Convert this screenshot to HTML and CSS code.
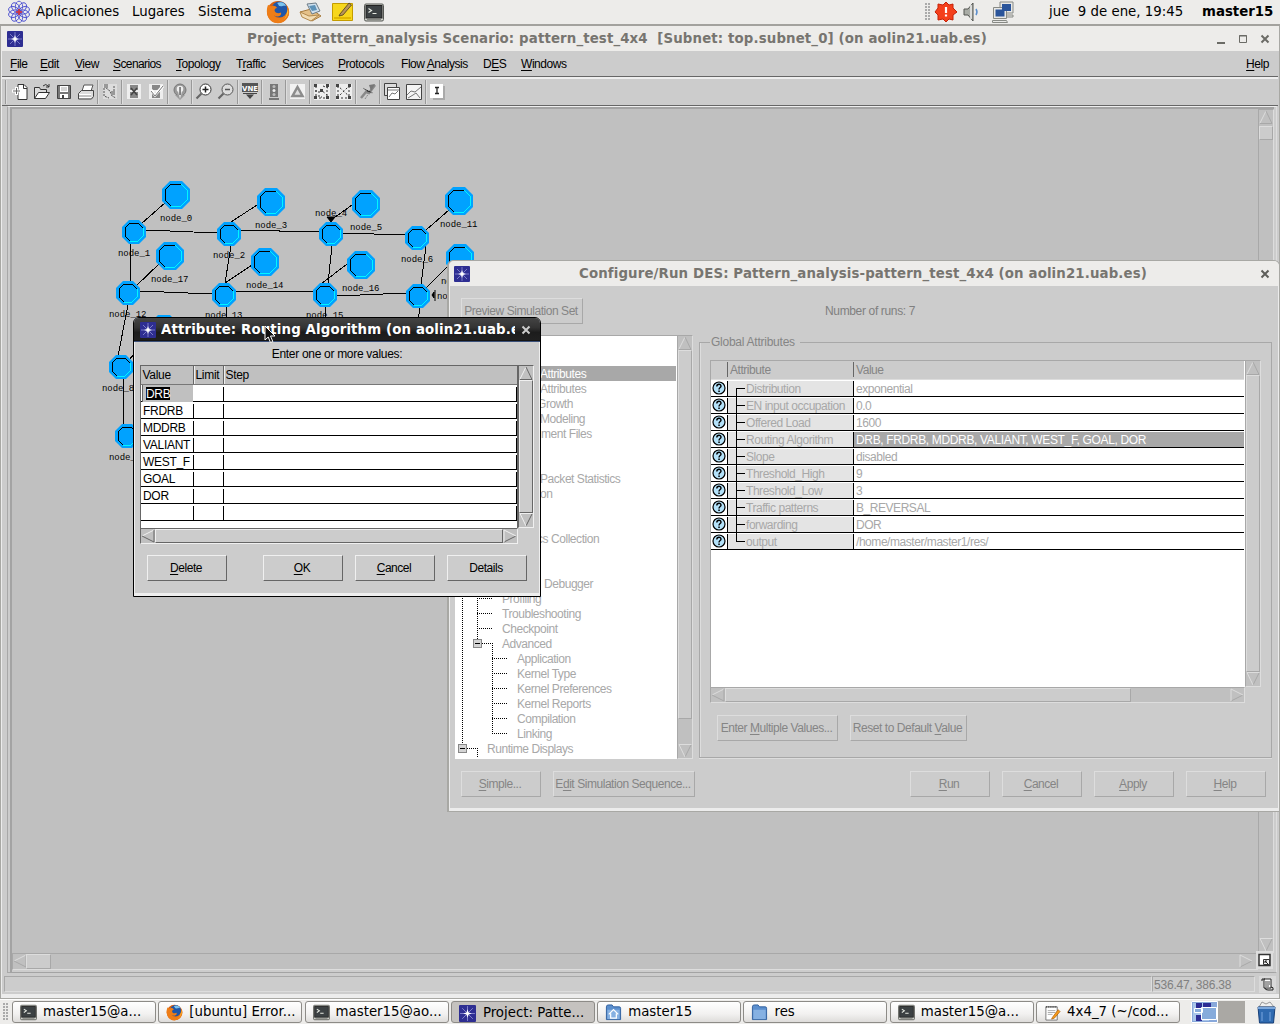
FILE: index.html
```html
<!DOCTYPE html>
<html lang="es">
<head>
<meta charset="utf-8">
<title>Pattern_analysis</title>
<link rel="stylesheet" href="styles.css">
</head>
<body>
<svg class="defs" width="0" height="0">
  <symbol id="up" viewBox="0 0 14 14"><path d="M7 1L1 13" stroke="var(--hi)"/><path d="M7 1l6 12.5H1" fill="none" stroke="var(--lo)"/></symbol>
  <symbol id="down" viewBox="0 0 14 14"><path d="M13 1L7 13" stroke="var(--lo)"/><path d="M13.500 .5H1l6 12.500" fill="none" stroke="var(--hi)"/></symbol>
  <symbol id="left" viewBox="0 0 14 14"><path d="M1 7l12-6" stroke="var(--hi)"/><path d="M1 7l12 6V1" fill="none" stroke="var(--lo)"/></symbol>
  <symbol id="right" viewBox="0 0 14 14"><path d="M1 13l12-6" stroke="var(--lo)"/><path d="M1 13V1l12 6" fill="none" stroke="var(--hi)"/></symbol>
  <symbol id="star" viewBox="0 0 16 16"><rect width="16" height="16" rx="1" fill="#2e2e92"/><path d="M8 1v14M1 8h14M3 3l10 10M13 3L3 13" stroke="#8f8fd4" stroke-width=".8"/><path d="M8 4l1 3 3 1-3 1-1 3-1-3-3-1 3-1z" fill="#fff"/></symbol>
  <symbol id="term" viewBox="0 0 20 18"><rect x=".5" y=".5" width="19" height="17" rx="1.500" fill="#d0d2cc" stroke="#555753"/><rect x="2" y="2" width="16" height="12.500" fill="#3c4143" stroke="#222"/><path d="M4.500 5l3 2-3 2M8.500 10h4" fill="none" stroke="#e8ece4" stroke-width="1.200"/><path d="M3 16h14" stroke="#888a85"/></symbol>
  <symbol id="fox" viewBox="0 0 24 24"><circle cx="12" cy="12" r="11" fill="#d9600f"/><circle cx="13.500" cy="9.500" r="8" fill="#1f56a8"/><path d="M11 3c4-2 8 0 9 3-3-1-4 1-6 0-2 0-1-2-3-3z" fill="#7cc4ee"/><path d="M2 5c2 0 2 2 4 1 2-.500 4 0 5 2-2 0-3 2-2 3.500 1 2 4 2 6 1 1 4-4 5-7 3 3 4 11 3 13-4 1-3 0-5-1-7 4 4 4 10 1 14-5 7-16 6-19-2C0 12 1 8 2 5z" fill="#ee7d17"/><path d="M22 9c1 7-4 12-10 12 4 0 8-2 9-8z" fill="#ffd23c"/></symbol>
  <symbol id="folder" viewBox="0 0 18 18"><path d="M1.500 3q0-2 2-2h4l1.500 2h6q1.500 0 1.500 1.500v12H1.500z" fill="#5b8fce" stroke="#2f5f9e"/><path d="M2.500 6h13v10h-13z" fill="#86b1e2"/></symbol>
  <symbol id="help" viewBox="0 0 14 14"><circle cx="7" cy="7" r="6" fill="#b4e2fa" stroke="#000" stroke-width="1.200"/><path d="M4.800 5.500C4.800 2.500 9.200 2.500 9 5.300 8.900 6.600 7 6.600 7 8.500" fill="none" stroke="#000" stroke-width="1.400"/><path d="M6.300 9.600h1.500v1.500H6.300z"/></symbol>
  <symbol id="big" viewBox="-14 -14 28 28" overflow="visible"><path d="M-6-14H6L14-6V6L6 14H-6L-14 6V-6z" fill="#00a2ff"/><path d="M-5 11L-11 5V-5L-5-11H5" fill="none" stroke="#000" shape-rendering="crispEdges"/><path d="M5-11L11-5V5L5 11H-5" fill="none" stroke="#00f6ff" shape-rendering="crispEdges"/></symbol>
  <symbol id="small" viewBox="-12 -12 24 24" overflow="visible"><path d="M-5-12H5L12-5V5L5 12H-5L-12 5V-5z" fill="#00a2ff"/><path d="M-4 9L-9 4V-4L-4-9H4L9-4" fill="none" stroke="#000" shape-rendering="crispEdges"/><path d="M9-4V4L4 9H-4" fill="none" stroke="#00f6ff" shape-rendering="crispEdges"/></symbol>
</svg>

<div class="panel top-panel">
  <svg width="24" height="24" viewBox="0 0 24 24" fill="none" stroke="#4a4ed0" stroke-width=".9"><g id="pet"><ellipse cx="12" cy="6.500" rx="3.600" ry="5.300"/><ellipse cx="12" cy="17.500" rx="3.600" ry="5.300"/></g><use href="#pet" transform="rotate(36 12 12)"/><use href="#pet" transform="rotate(72 12 12)"/><use href="#pet" transform="rotate(108 12 12)"/><use href="#pet" transform="rotate(144 12 12)"/><path d="M12 9v6M9 12h6" stroke="#d33" stroke-width="1.500"/></svg>
  <span>Aplicaciones</span><span>Lugares</span><span>Sistema</span>
  <svg width="24" height="24"><use href="#fox"/></svg>
  <svg width="24" height="22" viewBox="0 0 24 22"><path d="M1 11l11-3 10 7-9 5z" fill="#e5c188" stroke="#a77b3e"/><path d="M8 3l9-1 4 8-8 3z" fill="#cfe0ee" stroke="#6e7c86"/><path d="M10 5l6-1 2 5-5 1z" fill="#5d92b8"/><path d="M1 11l9 4 10-1-8 6-9-4z" fill="#f2dcb2" stroke="#b48a4e"/></svg>
  <svg width="22" height="20" viewBox="0 0 22 20"><path d="M.5 1.500h20v17H.5z" fill="#f7d71c" stroke="#c49c00"/><path d="M2 16h17" stroke="#e2b900" stroke-width="2"/><path d="M8 12L17 1l2.500 2L11 13l-4 1z" fill="#b8945a" stroke="#4e3d18" stroke-width=".8"/></svg>
  <svg width="20" height="19"><use href="#term"/></svg>
  <i></i>
  <b class="grip"></b>
  <svg width="24" height="24" viewBox="0 0 24 24"><path d="M12 2l3 3 4-1v4l4 4-4 3v5l-4-1-3 3-3-3-5 1v-5l-3-3 3-4V4l5 1z" fill="#f4401c" stroke="#c62208"/><path d="M12 7v6M12 14.500v2" stroke="#fff" stroke-width="2.200"/></svg>
  <svg width="18" height="20" viewBox="0 0 18 20"><path d="M1 7h4l5-6v18l-5-6H1z" fill="#a9aca6" stroke="#555753"/><path d="M8 3v14" stroke="#eee" stroke-width="1.500"/><path d="M13 7q2 3 0 6" fill="none" stroke="#5b8fce" stroke-width="1.500"/></svg>
  <svg width="22" height="22" viewBox="0 0 22 22"><g stroke="#888a85" fill="#e8e8e6"><path d="M8 1h13v11H8zM12 14h9v2h-9z"/><path d="M1.500 6.500h13v11h-13zM0.500 19.500h14l1 2h-15z"/></g><path d="M10 3h9v7h-9zM3.500 8.500h9v7h-9z" fill="#2a549a"/></svg>
  <span>jue&nbsp; 9 de ene, 19:45</span><strong>master15</strong>
</div>

<main class="window project">
  <div class="titlebar"><svg width="16" height="16"><use href="#star"/></svg><span>Project: Pattern_analysis Scenario: pattern_test_4x4&nbsp; [Subnet: top.subnet_0] (on aolin21.uab.es)</span>
    <svg width="58" height="14" viewBox="0 0 58 14" fill="none" stroke="#6b6b66"><path d="M4 11h8" stroke-width="2"/><path d="M26.500 3.500h7v7h-7z"/><path d="M26 4h8"/><path d="M48.500 3.500l7 7M55.500 3.500l-7 7" stroke-width="2"/></svg></div>
  <nav class="menu"><span><u>F</u>ile</span><span><u>E</u>dit</span><span><u>V</u>iew</span><span><u>S</u>cenarios</span><span><u>T</u>opology</span><span>T<u>r</u>affic</span><span>Serv<u>i</u>ces</span><span><u>P</u>rotocols</span><span>Flow <u>A</u>nalysis</span><span>D<u>E</u>S</span><span><u>W</u>indows</span><span><u>H</u>elp</span></nav>
  <div class="toolbar">
    <b></b>
    <svg viewBox="0 0 22 22"><path d="M9 3.500h6l3 3v12H9z" fill="#fff" stroke="#333"/><path d="M14.500 4v3.500H18" fill="none" stroke="#333"/><path d="M3 10h9M7.500 6v8" stroke="#fff" stroke-width="3"/><path d="M4 10h7M7.500 7v6" stroke="#666"/></svg>
    <svg viewBox="0 0 22 22"><path d="M3.500 17.500v-11h5l1 2h6v3" fill="#ddd" stroke="#333"/><path d="M3.500 17.500l4-6h11l-4 6z" fill="#fff" stroke="#333"/><path d="M12 5q3-3 5 0l1 1m0-3v3h-3" fill="none" stroke="#333"/></svg>
    <svg viewBox="0 0 22 22"><path d="M4.500 4.500h13v13h-13z" fill="#777" stroke="#444"/><path d="M7 5h8v6H7zM7 13h8v4H7z" fill="#fff"/><path d="M8 7h6M8 9h6" stroke="#aaa"/><path d="M9 14h2v3H9z" fill="#444"/></svg>
    <svg viewBox="0 0 22 22"><path d="M7 10l2-6h9l-2 6z" fill="#fff" stroke="#555"/><path d="M3.500 12.500l3-3h12v6l-2 2.500h-13z" fill="#ddd" stroke="#444"/><path d="M4 13h12v4H4z" fill="#fff"/><path d="M4 15h12" stroke="#888"/></svg>
    <b></b>
    <svg viewBox="0 0 22 22"><path d="M4 3h14v15H4z" fill="#ddd"/><path d="M6 4l2 4 3 2 2 5 4 2M15 5v9M5 7v8l5 2" stroke="#555" fill="none" stroke-dasharray="2 1"/><path d="M5 3h4v4H5zM12 10h4v4h-4z" fill="#999"/></svg>
    <b></b>
    <svg viewBox="0 0 22 22"><path d="M4 3h14v15H4z" fill="#eee"/><path d="M7 4h8v5H7zM7 11h8v6H7z" fill="#888"/><path d="M8 7l6 7M14 7l-6 7" stroke="#444" stroke-width="1.600"/></svg>
    <svg viewBox="0 0 22 22"><path d="M4 3h14v15H4z" fill="#eee"/><path d="M7 4h8v5H7zM7 11h8v6H7z" fill="#888"/><path d="M6 9l4 5 8-9" stroke="#fff" stroke-width="3" fill="none"/><path d="M6 10l4 5 8-10" stroke="#777" fill="none"/></svg>
    <b></b>
    <svg viewBox="0 0 22 22"><circle cx="11" cy="9" r="6" fill="#999" stroke="#777"/><path d="M6 14h10l-5 5z" fill="#999"/><circle cx="11" cy="8" r="3.300" fill="#eee"/><path d="M9 11h4l-2 7z" fill="#ddd"/><path d="M10.300 6h1.500v8h-1.500z" fill="#666"/></svg>
    <b></b>
    <svg viewBox="0 0 22 22"><circle cx="12.500" cy="8.500" r="5.500" fill="#fff" stroke="#333"/><path d="M8.500 12.500l-5 5" stroke="#666" stroke-width="2.200"/><path d="M9.500 8.500h6M12.500 5.500v6" stroke="#222" stroke-width="1.500"/></svg>
    <svg viewBox="0 0 22 22"><circle cx="12.500" cy="8.500" r="5.500" fill="#ddd" stroke="#555"/><path d="M8.500 12.500l-5 5" stroke="#666" stroke-width="2.200"/><path d="M10 8.500h5" stroke="#555" stroke-width="1.500"/></svg>
    <b></b>
    <svg viewBox="0 0 22 22"><path d="M3 2h16v9H3z" fill="#555"/><text x="11" y="9.500" text-anchor="middle" class="vne">VNE</text><path d="M4 12.500h14" stroke="#444"/><path d="M7 13.500h8l-4 4.500z" fill="#444"/></svg>
    <b></b>
    <svg viewBox="0 0 22 22"><path d="M7 3h8v13H7zM6 17h10v2H6z" fill="#777"/><circle cx="11" cy="5.500" r="1.500" fill="#bbb"/><circle cx="11" cy="9.500" r="1.500" fill="#eee"/><circle cx="11" cy="13.500" r="1.500" fill="#bbb"/></svg>
    <b></b>
    <svg viewBox="0 0 22 22"><path d="M3 3h15v15H3z" fill="#f2f2f2"/><path d="M10.500 6l5 9h-10z" fill="#ddd" stroke="#8c8c8c" stroke-width="2.500"/></svg>
    <b></b>
    <svg viewBox="0 0 22 22"><path d="M3 3h16v16H3z" fill="#eee"/><path d="M4 4h4M4 10h4v6h3M9 8l7 6M12 5l5 2M5 5v11M16 5v12M4 17h14" stroke="#333" stroke-dasharray="2 2" fill="none"/><path d="M3 3h3v3H3zM15 3h3v3h-3zM3 15h3v3H3zM15 15h3v3h-3zM9 8h3v3H9z" fill="#444"/></svg>
    <svg viewBox="0 0 22 22"><path d="M3 3h16v16H3z" fill="#eee"/><path d="M4 4l14 13M17 4L4 17M5 5v11M16 5v12M4 17h14" stroke="#333" stroke-dasharray="2 2" fill="none"/><path d="M3 3h3v3H3zM15 3h3v3h-3zM3 15h3v3H3zM15 15h3v3h-3z" fill="#444"/></svg>
    <b></b>
    <svg viewBox="0 0 22 22"><path d="M4 17l5-6 3 1 6-8" stroke="#888" stroke-width="2.500" fill="none"/><path d="M6 7l5 4 5 1M8 18l4-6" stroke="#888" stroke-dasharray="2 1"/><path d="M12 4l6-1-4 7z" fill="#777"/></svg>
    <b></b>
    <svg viewBox="0 0 22 22"><path d="M3.500 2.500h12v12h-12z" fill="#ddd" stroke="#444"/><path d="M6.500 6.500h12v12h-12z" fill="#fff" stroke="#444"/><path d="M7 9h11M8 16l3-4 3 1 3-3" fill="none" stroke="#777"/></svg>
    <svg viewBox="0 0 22 22"><path d="M3.500 3.500h15v15h-15z" fill="#f4f4f4" stroke="#444"/><path d="M4 14l4-4 4 1 6-5M5 17l5-3 3-2 4 5" fill="none" stroke="#777"/></svg>
    <b></b>
    <svg viewBox="0 0 22 22"><path d="M6 5h12v14H6z" fill="#aaa"/><path d="M3 3h13v14H3z" fill="#fff"/><path d="M8 6.500h4M8 12.500h4M10 6v7" stroke="#222" stroke-width="1.300"/></svg>
  </div>
  <div class="workspace">
    <div class="canvas">
      <svg class="net" width="1246" height="844" viewBox="12 109 1246 844">
        <g stroke="#000" fill="none" shape-rendering="crispEdges">
          <path d="M166 202L141 224M146 230L217 233M241 230h38v1h42M343 233L405 235M257 205L231 222M352 205L331 220M449 210L426 230"/>
          <path d="M130 243L131 282M231 246L225 283M332 246L328 283M426 246L421 285M159 264L136 286M252 265L225 283M347 264L321 284M447 267L426 288"/>
          <path d="M140 291L212 294M236 291H313M337 296L406 293M128 305L118 356M227 306L226 320M325 306V320M420 308L418 320M123 378V425M129 360L134 354"/>
        </g>
        <path d="M327 217h8l-4 5zM435 290v11M434 292l-2 3 2 3z" stroke="#000"/>
        <use href="#big" x="162" y="181" width="28" height="28"/><use href="#big" x="257" y="188" width="28" height="28"/><use href="#big" x="156" y="242" width="28" height="28"/><use href="#big" x="251" y="248" width="28" height="28"/><use href="#big" x="352" y="190" width="28" height="28"/><use href="#big" x="445" y="187" width="28" height="28"/><use href="#big" x="347" y="251" width="28" height="28"/><use href="#big" x="446" y="244" width="28" height="28"/><use href="#big" x="150" y="315" width="28" height="28"/>
        <use href="#small" x="122" y="220" width="24" height="24"/><use href="#small" x="217" y="222" width="24" height="24"/><use href="#small" x="319" y="222" width="24" height="24"/><use href="#small" x="405" y="226" width="24" height="24"/><use href="#small" x="116" y="281" width="24" height="24"/><use href="#small" x="212" y="283" width="24" height="24"/><use href="#small" x="313" y="283" width="24" height="24"/><use href="#small" x="406" y="284" width="24" height="24"/><use href="#small" x="109" y="355" width="24" height="24"/><use href="#small" x="115" y="424" width="24" height="24"/>
        <g class="node"><text x="160" y="221">node_0</text><text x="118" y="256">node_1</text><text x="255" y="228">node_3</text><text x="213" y="258">node_2</text><text x="151" y="282">node_17</text><text x="246" y="288">node_14</text><text x="109" y="317">node_12</text><text x="205" y="318">node_13</text><text x="315" y="216">node_4</text><text x="350" y="230">node_5</text><text x="440" y="227">node_11</text><text x="401" y="262">node_6</text><text x="342" y="291">node_16</text><text x="306" y="318">node_15</text><text x="441" y="284">no</text><text x="437" y="299">no</text><text x="102" y="391">node_8</text><text x="109" y="460">node_</text></g>
      </svg>
      <div class="vbar"><svg><use href="#up"/></svg><b></b><svg><use href="#down"/></svg></div>
      <div class="hbar"><svg><use href="#left"/></svg><b></b><svg><use href="#right"/></svg></div>
      <svg class="corner" viewBox="0 0 17 18"><path d="M0 0h17v18H0z" fill="#ddd"/><path d="M3 3.500h11v11H3z" fill="#fff" stroke="#333" stroke-width="1.500"/><path d="M7.500 8.500h6v5h-6z" fill="#eee" stroke="#333"/><path d="M9 10l3 3M9 12v-2h2" stroke="#222" fill="none"/></svg>
    </div>
  </div>
  <div class="status"><span></span><span>536.47, 386.38</span><svg width="17" height="17" viewBox="0 0 17 17"><path d="M0 0h17v17H0z" fill="#d9d9d9"/><path d="M5 3h7v9H5z" fill="#fff" stroke="#222"/><path d="M3 5V3h3M6 12q0 2 3 2h5q1-3-2-3" fill="none" stroke="#222"/><path d="M6 6h5M6 8h5M6 10h4" stroke="#444"/></svg></div>
</main>

<section class="window config">
  <div class="titlebar"><svg width="16" height="16"><use href="#star"/></svg><span>Configure/Run DES: Pattern_analysis-pattern_test_4x4 (on aolin21.uab.es)</span><svg width="14" height="14" viewBox="0 0 14 14"><path d="M3.500 3.500l7 7M10.500 3.500l-7 7" stroke="#5e5e5a" stroke-width="2"/></svg></div>
  <div class="cfg-top"><button>Preview Simulation Set</button><span>Number of runs: 7</span></div>
  <div class="cfg-mid">
    <div class="tree">
      <ul>
        <li class="sel c1">Attributes</li><li class="c1">Attributes</li><li class="c0">Growth</li><li class="c1">Modeling</li><li class="c2">ment Files</li><li></li><li></li><li class="c1">Packet Statistics</li><li class="c1">on</li><li></li><li></li><li class="c0">cs Collection</li><li class="c0">l</li><li></li><li class="c3">Debugger</li>
        <li class="l2">Profiling</li><li class="l2">Troubleshooting</li><li class="l2">Checkpoint</li><li class="l2">Advanced</li><li class="l3">Application</li><li class="l3">Kernel Type</li><li class="l3">Kernel Preferences</li><li class="l3">Kernel Reports</li><li class="l3">Compilation</li><li class="l3">Linking</li><li class="l1">Runtime Displays</li>
      </ul>
      <svg class="branches" width="60" height="170" viewBox="455 590 60 170" shape-rendering="crispEdges"><path d="M462.500 590V744M477.500 590V639M477 598.500h15M477 613.500h15M477 628.500h15M482 643.500h10M492.500 643V734M492 658.500h15M492 673.500h15M492 688.500h15M492 703.500h15M492 718.500h15M492 733.500h15M467 748.500h10M477.500 748v10" stroke="#000" stroke-dasharray="1 1" fill="none"/><path d="M473.500 639.500h8v8h-8zM458.500 744.500h8v8h-8z" fill="#d4d4d4" stroke="#888"/><path d="M475 643.500h5M460 748.500h5" stroke="#000"/></svg>
    </div>
    <div class="vbar"><svg><use href="#up"/></svg><b></b><svg><use href="#down"/></svg></div>
    <fieldset>
      <legend>Global Attributes</legend>
      <div class="grid-wrap">
        <div class="attrs">
          <div class="r head"><span></span><span>Attribute</span><span>Value</span></div>
          <div class="r"><svg><use href="#help"/></svg><span>Distribution</span><span>exponential</span></div>
          <div class="r"><svg><use href="#help"/></svg><span>EN input occupation</span><span>0.0</span></div>
          <div class="r"><svg><use href="#help"/></svg><span>Offered Load</span><span>1600</span></div>
          <div class="r on"><svg><use href="#help"/></svg><span>Routing Algorithm</span><span>DRB, FRDRB, MDDRB, VALIANT, WEST_F, GOAL, DOR</span></div>
          <div class="r"><svg><use href="#help"/></svg><span>Slope</span><span>disabled</span></div>
          <div class="r"><svg><use href="#help"/></svg><span>Threshold_High</span><span>9</span></div>
          <div class="r"><svg><use href="#help"/></svg><span>Threshold_Low</span><span>3</span></div>
          <div class="r"><svg><use href="#help"/></svg><span>Traffic patterns</span><span>B_REVERSAL</span></div>
          <div class="r"><svg><use href="#help"/></svg><span>forwarding</span><span>DOR</span></div>
          <div class="r"><svg><use href="#help"/></svg><span>output</span><span>/home/master/master1/res/</span></div>
        </div>
        <div class="vbar"><svg><use href="#up"/></svg><b></b><svg><use href="#down"/></svg></div>
        <div class="hbar"><svg><use href="#left"/></svg><b></b><svg><use href="#right"/></svg></div>
      </div>
      <div class="fs-buttons"><button>Enter <u>M</u>ultiple Values...</button><button>Reset to Default <u>V</u>alue</button></div>
    </fieldset>
  </div>
  <div class="cfg-bottom"><button><u>S</u>imple...</button><button class="wide">E<u>di</u>t Simulation Sequence...</button><i></i><button><u>R</u>un</button><button><u>C</u>ancel</button><button><u>A</u>pply</button><button><u>H</u>elp</button></div>
</section>

<section class="window dialog">
  <div class="titlebar"><svg width="16" height="16"><use href="#star"/></svg><span>Attribute: Routing Algorithm (on aolin21.uab.es)</span><svg width="14" height="14" viewBox="0 0 14 14"><path d="M3.500 3.500l7 7M10.500 3.500l-7 7" stroke="#ccc" stroke-width="2"/></svg></div>
  <p>Enter one or more values:</p>
  <div class="grid-wrap">
    <div class="vals">
      <div class="r head"><span>Value</span><span>Limit</span><span>Step</span></div>
      <div class="r edit"><span><mark>DRB</mark></span><span></span><span></span></div>
      <div class="r"><span>FRDRB</span><span></span><span></span></div>
      <div class="r"><span>MDDRB</span><span></span><span></span></div>
      <div class="r"><span>VALIANT</span><span></span><span></span></div>
      <div class="r"><span>WEST_F</span><span></span><span></span></div>
      <div class="r"><span>GOAL</span><span></span><span></span></div>
      <div class="r"><span>DOR</span><span></span><span></span></div>
      <div class="r"><span></span><span></span><span></span></div>
    </div>
    <div class="vbar"><svg><use href="#up"/></svg><b></b><svg><use href="#down"/></svg></div>
    <div class="hbar"><svg><use href="#left"/></svg><b></b><svg><use href="#right"/></svg></div>
  </div>
  <div class="dlg-buttons"><button><u>D</u>elete</button><i></i><button><u>O</u>K</button><button><u>C</u>ancel</button><button>Details</button></div>
</section>
<svg class="cursor" width="12" height="19" viewBox="0 0 12 19"><path d="M1 1v14l3.200-3 2.300 5.500 2.300-1L6.500 11H11z" fill="#111" stroke="#fff"/></svg>

<div class="panel taskbar">
  <b class="grip"></b>
  <div class="task"><svg><use href="#term"/></svg>master15@a...</div>
  <div class="task"><svg><use href="#fox"/></svg>[ubuntu] Error...</div>
  <div class="task"><svg><use href="#term"/></svg>master15@ao...</div>
  <div class="task active"><svg><use href="#star"/></svg>Project: Patte...</div>
  <div class="task"><svg viewBox="0 0 18 18"><use href="#folder"/><path d="M4 11l5-5 5 5M6 10v5h6v-5" fill="none" stroke="#fff" stroke-width="1.300"/></svg>master15</div>
  <div class="task"><svg><use href="#folder"/></svg>res</div>
  <div class="task"><svg><use href="#term"/></svg>master15@a...</div>
  <div class="task"><svg viewBox="0 0 18 18"><path d="M2 3h12v14H2z" fill="#fff" stroke="#777"/><path d="M2 3h12" stroke="#444" stroke-width="2" stroke-dasharray="1 1"/><path d="M4 7h8M4 9h8M4 11h5" stroke="#aaa"/><path d="M9 14l6-8 2 2-6 7-3 1z" fill="#f59a1a" stroke="#a85a00" stroke-width=".7"/></svg>4x4_7 (~/cod...</div>
  <svg class="pager" width="54" height="22" viewBox="0 0 54 22"><path d="M0 0h54v22H0z" fill="#aaa8a4"/><path d="M0 0h27v22H0z" fill="#88a8da"/><path d="M2 2h16v18H2z" fill="#a9c6ea"/><path d="M5 2h6v5H5zM12 2h8v5h-8zM5 14h6v6H5z" fill="#2c2c94"/><path d="M3.500 7.500h8v4h-8zM10.500 6.500h15v12h-15z" fill="#86abdb" stroke="#fff"/><path d="M.5.500h26v21H.5z" fill="none" stroke="#fff"/></svg>
  <svg class="trash" width="21" height="23" viewBox="0 0 21 23"><path d="M3 6l3-5 4 2 4-2 4 5z" fill="#eee" stroke="#999"/><path d="M2 6h17l-1.500 16h-14z" fill="#2f6ab0" stroke="#173f78"/><path d="M2 7h17" stroke="#7ba7dc" stroke-width="2"/><path d="M6 11v9M14 11v9" stroke="#5488c8" stroke-width="2"/></svg>
</div>
</body>
</html>
```
FILE: styles.css
```css
* { box-sizing: border-box; }
body { margin: 0; width: 1280px; height: 1024px; overflow: hidden; position: relative; background: #ccc;
  font: 12px/15px "Liberation Sans", Arial, sans-serif; letter-spacing: -.45px; color: #000; --hi: #ddd; --lo: #a8a8a8; }
svg { display: block; flex: none; }
.defs { position: absolute; }
u { text-decoration: underline; text-underline-offset: 2px; text-decoration-thickness: 1px; }
button { font: inherit; letter-spacing: inherit; color: #858585; background: #ccc; border: 1px solid; border-color: var(--hi) var(--lo) var(--lo) var(--hi); width: 80px; height: 26px; padding: 1px 2px 0 0; white-space: nowrap; }

.panel { background: #edecea; display: flex; align-items: center; font: 13.33px/20px "DejaVu Sans", sans-serif; letter-spacing: 0; white-space: nowrap; }
.top-panel { height: 26px; padding: 0 0 2px 7px; border-bottom: 2px solid #a3a29e; display: grid;
  grid-template-columns: 29px 96px 66px 68px 33px 33px 32px 24px 1fr 9px 29px 29px 57px 153px 78px; }
.grip { width: 5px; height: 18px; background: radial-gradient(circle at 1px 1px, #aaa 1px, transparent 1.2px) 0 0 / 3px 3px; }

.window { position: absolute; }
.titlebar { display: flex; align-items: center; height: 25px; background: #edecea; color: #777570; font: bold 13.33px/20px "DejaVu Sans", sans-serif; letter-spacing: .13px; white-space: nowrap; }
.titlebar span { flex: 1; text-align: center; overflow: hidden; }

.project { left: 0; top: 26px; width: 1280px; height: 973px; border: solid #a8a8a4; border-width: 0 1px 1px 1px; background: #ccc; display: flex; flex-direction: column; box-shadow: inset 1px -4px 0 #ececec; }
.project .titlebar { padding: 0 8px 0 6px; }
.project .titlebar span { padding-right: 2px; }
.menu { height: 26px; display: grid; align-items: center; padding: 2px 9px 0 8px; margin: 0 1px; border-bottom: 1px solid #666;
  grid-template-columns: 30px 35px 38px 63px 60px 46px 56px 63px 82px 38px 1fr auto; }
.menu span:nth-child(4), .menu span:nth-child(7) { letter-spacing: -.6px; }
.toolbar { height: 29px; display: flex; align-items: center; padding-left: 3px; margin: 0 1px; border-top: 2px solid #eee; border-bottom: 1px solid #666; }
.toolbar svg { width: 22px; height: 22px; }
.toolbar b { width: 2px; height: 24px; border-left: 1px solid #999; border-right: 1px solid #ddd; }
.toolbar b:first-child { margin-right: 2px; }
.vne { font: bold 7px "DejaVu Sans", sans-serif; fill: #fff; letter-spacing: 0; }
.workspace { flex: none; height: 867px; margin: 0 2px 0 6px; border: 1px solid #a8a8a8; border-right-color: #ddd; border-top-color: #eee; padding: 0 2px 2px 2px; }
.canvas { height: 866px; border: solid #a3a3a3; border-width: 2px 0 1px 2px; display: grid; grid-template-columns: 1246px 16px; grid-template-rows: 844px 17px; background: #ccc; }
.net { background: #c0c0c0; }
.node { font: 9px "Liberation Mono", monospace; letter-spacing: -.05px; }
.vbar, .hbar { display: flex; background: #c0c0c0; }
.vbar { flex-direction: column; border: 1px solid; border-color: var(--lo) var(--hi) var(--hi) var(--lo); width: 16px; }
.hbar { border: 1px solid; border-color: var(--lo) var(--hi) var(--hi) var(--lo); height: 16px; }
.vbar svg, .hbar svg { width: 14px; height: 14px; }
.vbar b, .hbar b { background: #ccc; border: 1px solid; border-color: var(--hi) var(--lo) var(--lo) var(--hi); }
.canvas .vbar b { height: 14px; margin: 2px 0 auto; }
.canvas .hbar { height: 17px; padding-right: 4px; }
.canvas .hbar b { width: 25px; margin-right: auto; margin-left: -1px; }
.corner { width: 17px; height: 18px; margin: -2px 0 0 -2px; }
.status { display: grid; grid-template-columns: 1148px 103px 17px; height: 17px; margin: 3px 0 0 3px; color: #808080; }
.status span { height: 16px; border: 1px solid; border-color: #a8a8a8 #ddd #ddd #a8a8a8; padding-left: 1px; line-height: 16px; }
.status span + span { letter-spacing: -.2px; }
.status svg { margin: 0 0 0 4px; }

.config { left: 447px; top: 260px; width: 833px; height: 552px; border: solid #a8a8a4; border-width: 1px 1px 1px 2px; border-radius: 6px 6px 0 0; background: #ccc; box-shadow: inset 1px -3px 0 #ececec, inset -1px 0 0 #ececec; }
.config .titlebar { padding: 0 7px 0 5px; border-radius: 5px 5px 0 0; }
.config .titlebar span { padding-right: 2px; }
.cfg-top { height: 49px; padding: 12px 0 0 12px; display: flex; color: #808080; }
.cfg-top button { width: 122px; }
.cfg-top span { margin: 6px 0 0 242px; letter-spacing: -.35px; }
.cfg-mid { display: flex; height: 425px; padding: 0 6px; }
.tree { position: relative; width: 222px; height: 424px; padding-top: 30px; background: #fff; border-top: 1px solid #a8a8a8; overflow: hidden; }
.tree ul { margin: 0; padding: 0; list-style: none; color: #a8a8a8; }
.tree li { height: 15px; line-height: 16px; white-space: nowrap; }
.tree .sel { background: #a8a8a8; color: #fff; margin-right: 1px; }
.c0 { padding-left: 82px; } .c1 { padding-left: 85px; } .c2 { padding-left: 86px; } .c3 { padding-left: 89px; }
.l1 { padding-left: 32px; } .l2 { padding-left: 47px; } .l3 { padding-left: 62px; }
.branches { position: absolute; left: 0; bottom: -1px; }
.cfg-mid > .vbar { height: 424px; }
.cfg-mid > .vbar b { height: 369px; margin-bottom: auto; }
fieldset { min-width: 0; width: 573px; height: 423px; margin: 0 0 0 6px; padding: 9px 0 0 10px; border: 1px solid #a8a8a8; box-shadow: inset 1px 0 0 #ddd, 0 1px 0 #ddd; color: #858585; }
legend { height: 15px; line-height: 15px; padding: 0 5px 0 1px; letter-spacing: -.25px; }
.grid-wrap { display: grid; grid-template-columns: 1fr 16px; }
fieldset .grid-wrap { width: 551px; grid-template-columns: 535px 16px; grid-template-rows: 327px 16px; margin-top: 1px; }
.attrs { background: #fff; border: 1px solid #a8a8a8; border-width: 1px 0 0 1px; }
.r { display: grid; height: 17px; line-height: 16px; white-space: nowrap; }
.attrs .r { grid-template-columns: 16px 126px 1fr; grid-template-rows: 16px; color: #a8a8a8; border-bottom: 1px solid #000; margin-right: 1px; }
.attrs .r svg { width: 14px; height: 14px; margin: 1px 0 0 1px; }
.attrs .r span { border-left: 1px solid #000; margin-top: 1px; padding-left: 2px; line-height: 16px; }
.attrs .r span:nth-child(2) { position: relative; padding-left: 18px; background: #e4e4e4; }
.attrs .r:not(.head) span:nth-child(2)::before { content: ""; position: absolute; left: 8px; top: -1px; width: 9px; height: 17px; background: linear-gradient(#000 0 0) 0 8px / 9px 1px no-repeat, linear-gradient(#000 0 0) 0 0 / 1px 17px no-repeat; }
.attrs .r:nth-child(2) span:nth-child(2)::before { clip-path: inset(8px 0 0 0); }
.attrs .r:last-child span:nth-child(2)::before { clip-path: inset(0 0 8px 0); }
.attrs .on span:last-child { background: #a8a8a8; color: #fff; letter-spacing: -.35px; }
.attrs .head { height: 19px; grid-template-rows: 18px; background: #ccc; color: #858585; border-bottom: 1px solid #ddd; }
.attrs .head span, .attrs .head span:nth-child(2) { background: none; padding-left: 2px; line-height: 17px; margin-bottom: 2px; border-color: #666; }
.attrs .head span:first-child { border: 0; }
fieldset .vbar b { flex: 1; }
fieldset .hbar b { width: 406px; margin-right: auto; }
.fs-buttons { display: flex; gap: 12px; padding: 12px 0 0 7px; }
.fs-buttons button { width: 121px; }
.fs-buttons button + button { width: 117px; }
.cfg-bottom { display: flex; gap: 12px; padding: 11px 13px 0 12px; }
.cfg-bottom i { flex: 1; }
.cfg-bottom .wide { width: 142px; }

.dialog { left: 133px; top: 317px; width: 408px; height: 280px; border: 1px solid #000; border-radius: 6px 6px 0 0; background: #ccc; box-shadow: inset 1px -3px 0 #eee, inset -1px 0 0 #eee; --hi: #f0f0f0; --lo: #666; }
.dialog .titlebar { height: 24px; padding: 0 7px 0 6px; background: linear-gradient(#444 0, #333 40%, #1c1c1c 60%, #202020 90%, #000); color: #fff; border-radius: 5px 5px 0 0; box-shadow: inset 0 -1px 0 #3a4f78; }
.dialog .titlebar span { text-align: left; margin-left: 5px; }
.dialog .titlebar svg:last-child { margin-left: 4px; }
.dialog p { margin: 5px 0 3px; text-align: center; line-height: 15px; letter-spacing: -.3px; }
.dialog .grid-wrap { width: 394px; margin-left: 6px; grid-template-columns: 378px 16px; grid-template-rows: 163px 16px; }
.vals { background: #fff; border: 1px solid #666; border-width: 1px 1px 0 1px; }
.vals .r { grid-template-columns: 53px 30px 1fr; border-bottom: 1px solid #000; }
.vals .r span { border-right: 1px solid #000; margin-top: 2px; padding-left: 2px; line-height: 14px; letter-spacing: -.3px; }
.vals .head { height: 19px; background: #c0c0c0; border-bottom: 1px solid #777; }
.vals .r.head span { line-height: 18px; margin: 0 0 1px; padding-left: 1.5px; border-right-color: #666; box-shadow: 1px 0 0 #eee; }
.vals .r.head span:last-child { border: 0; box-shadow: none; }
.vals .edit span:first-child { background: #c0c0c0; margin: 0 1px -1px 1px; padding: 2px 0 0 3px; border-right: 0; border-left: 1px solid #666; }
mark { display: block; width: 24px; height: 13px; line-height: 14px; background: #000; color: #fff; }
.dialog .vbar { height: 163px; }
.dialog .vbar b, .dialog .hbar b { flex: 1; }
.dialog .hbar { border-top-color: #666; }
.dlg-buttons { display: flex; gap: 12px; padding: 11px 13px; }
.dlg-buttons i { flex: 1; }
.dlg-buttons button { color: #000; }
.cursor { position: absolute; left: 264px; top: 325px; }

.taskbar { position: absolute; left: 0; top: 999px; width: 1280px; height: 25px; padding-left: 3px; gap: 2.3px; border-top: 1px solid #fff; }
.taskbar .grip { margin-right: 1.7px; }
.task { width: 144px; height: 22px; display: flex; align-items: center; gap: 6px; padding-left: 7px; border: 1px solid #8d8b87; border-radius: 3px; background: linear-gradient(#fff, #f2f1f0 60%, #dedcda); overflow: hidden; }
.task svg { width: 17px; height: 17px; }
.task.active { background: #c5c2bf; padding-top: 2px; gap: 7px; }
.pager { margin-left: 9px; }
.trash { margin-left: 8px; }
```
